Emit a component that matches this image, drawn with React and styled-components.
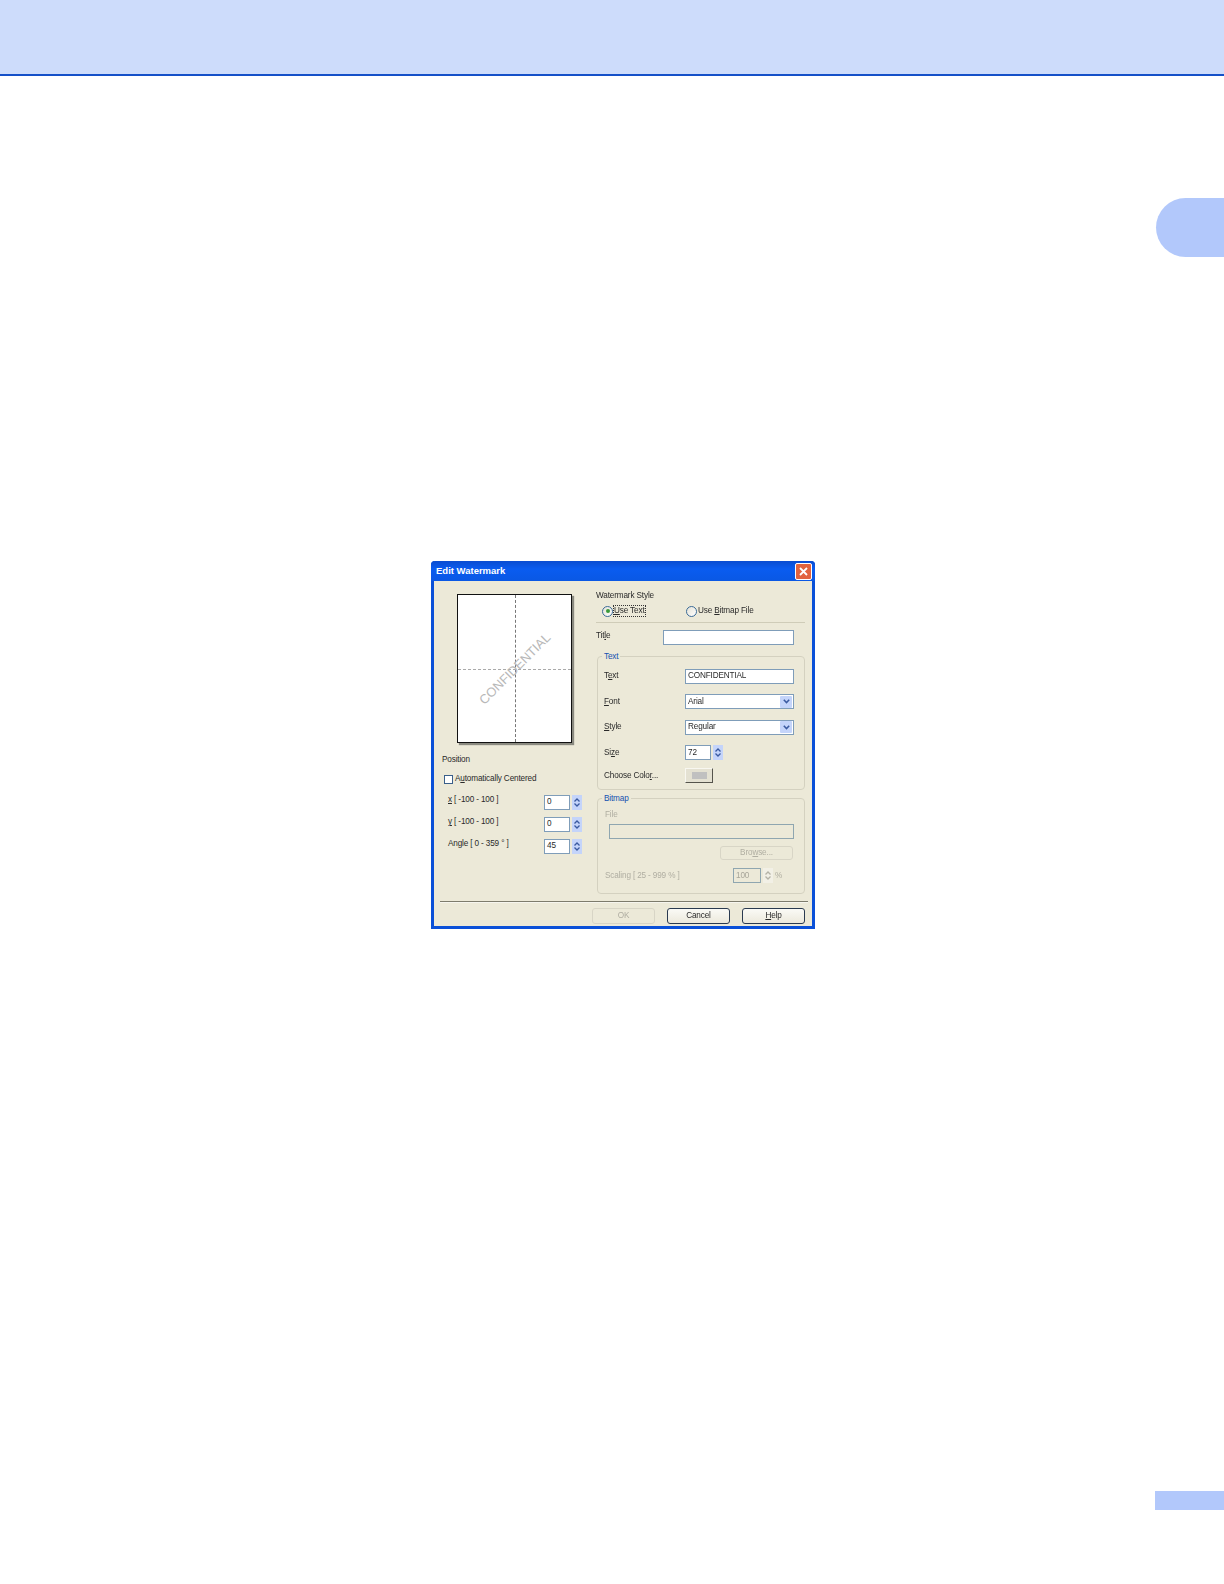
import styled, { createGlobalStyle } from "styled-components";

const Global = createGlobalStyle`
  html, body { margin: 0; padding: 0; background: #fff; }
  body { font-family: "Liberation Sans", Arial, sans-serif; }
`;

const Page = styled.div`
  position: relative;
  width: 1224px;
  height: 1584px;
  overflow: hidden;
`;

const Header = styled.div`
  height: 74px;
  background: #cddcfb;
  border-bottom: 2px solid #1450c8;
`;

const ChapterTab = styled.div`
  position: absolute;
  left: 1156px;
  top: 198px;
  width: 68px;
  height: 59px;
  background: #b2c8fb;
  border-radius: 30px 0 0 30px;
`;

const PageTab = styled.div`
  position: absolute;
  left: 1155px;
  top: 1491px;
  width: 69px;
  height: 19px;
  background: #b2c8fb;
`;

const Dialog = styled.div`
  box-sizing: border-box;
  width: 384px;
  height: 368px;
  margin: 485px 0 0 431px;
  border: 3px solid #0a50d8;
  border-top: 0;
  border-radius: 4px 4px 0 0;
  background: #ece9d8;
  color: #2a2a2a;
  font-size: 8.2px;
  line-height: 10px;
  letter-spacing: -0.15px;
  filter: blur(0.35px);
`;

const TitleBar = styled.div`
  display: flex;
  align-items: center;
  justify-content: space-between;
  height: 20px;
  margin: 0 -3px;
  padding: 0 3px 0 5px;
  border-radius: 4px 4px 0 0;
  background: linear-gradient(#0a4cd0, #0a5cf0 40%, #0a58e4);
  color: #fff;
  font-size: 9.5px;
  font-weight: 700;
  letter-spacing: 0;
`;

const CloseButton = styled.div`
  display: flex;
  align-items: center;
  justify-content: center;
  width: 15px;
  height: 15px;
  border: 1px solid #fff;
  border-radius: 2px;
  background: #e2633f;
`;

const Body = styled.div`
  display: grid;
  grid-template-columns: 159px 1fr;
  height: 320px;
`;

const LeftColumn = styled.div`
  padding: 13px 0 0 23px;
`;

const Preview = styled.div`
  position: relative;
  box-sizing: border-box;
  width: 115px;
  height: 149px;
  border: 1px solid #111;
  background: #fff;
  box-shadow: 2px 2px 1px #8a8a80;
  overflow: hidden;
`;

const GuideV = styled.div`
  position: absolute;
  left: 57px;
  top: 0;
  bottom: 0;
  border-left: 1px dashed #777;
`;

const GuideH = styled.div`
  position: absolute;
  left: 0;
  right: 0;
  top: 74px;
  border-top: 1px dashed #aaa;
`;

const Stamp = styled.div`
  position: absolute;
  left: 57px;
  top: 74px;
  transform: translate(-50%, -50%) rotate(-45deg);
  color: #b8b8b8;
  font-size: 12.9px;
  letter-spacing: 0;
  white-space: nowrap;
`;

const PositionBlock = styled.div`
  margin: 12px 0 0 -15px;
`;

const CheckRow = styled.div`
  display: flex;
  align-items: center;
  gap: 2px;
  margin: 9px 0 7px 2px;
`;

const Checkbox = styled.div`
  box-sizing: border-box;
  width: 9px;
  height: 9px;
  border: 1px solid #3a5f8a;
  background: #fff;
`;

const SpinRow = styled.div`
  display: grid;
  grid-template-columns: 96px auto;
  align-items: center;
  height: 22px;
  padding-left: 6px;
`;

const RaisedLabel = styled.span`
  padding-bottom: 4px;
`;

const Spin = styled.div`
  display: flex;
  align-items: center;
  gap: 2px;
`;

const Field = styled.div`
  box-sizing: border-box;
  display: flex;
  align-items: center;
  flex: none;
  width: ${(p) => p.$w || 109}px;
  height: ${(p) => p.$h || 15}px;
  padding-left: 2px;
  border: 1px solid ${(p) => (p.$off ? "#8fa6b0" : "#7f9db9")};
  background: ${(p) => (p.$off ? "#ece9d8" : "#fff")};
  color: ${(p) => (p.$off ? "#a8a69a" : "#2a2a2a")};
`;

const WideField = styled(Field)`
  margin: 4px 0 0 4px;
`;

const SpinArrows = styled.div`
  display: flex;
  flex-direction: column;
  justify-content: center;
  align-items: center;
  gap: 1px;
  width: 10px;
  height: 15px;
  background: ${(p) => (p.$off ? "#f2f0e6" : "#c4d4fa")};
  color: ${(p) => (p.$off ? "#b4b2a6" : "#3a5aa0")};
`;

const RightColumn = styled.div`
  padding: 10px 8px 0 3px;
`;

const StyleRadios = styled.div`
  display: flex;
  align-items: center;
  height: 16px;
  margin-top: 2px;
  padding: 0 0 0 6px;
`;

const RadioItem = styled.div`
  display: flex;
  align-items: center;
  gap: 1px;
  width: ${(p) => p.$w}px;
`;

const Radio = styled.div`
  display: flex;
  align-items: center;
  justify-content: center;
  box-sizing: border-box;
  width: 11px;
  height: 11px;
  border: 1px solid #3a6a96;
  border-radius: 50%;
  background: linear-gradient(135deg, #e4e2d6, #fff);
`;

const RadioDot = styled.div`
  width: 4px;
  height: 4px;
  border-radius: 50%;
  background: #3a9a3a;
`;

const FocusLabel = styled.span`
  outline: 1px dotted #333;
`;

const Underline = styled.span`
  text-decoration: underline;
`;

const Divider = styled.div`
  height: 0;
  border-top: 1px solid #cfccb8;
  margin-top: 3px;
`;

const TitleRow = styled.div`
  display: grid;
  grid-template-columns: 67px 131px;
  align-items: center;
  height: 15px;
  margin-top: 7px;
`;

const Group = styled.div`
  position: relative;
  box-sizing: border-box;
  width: 208px;
  height: ${(p) => p.$h}px;
  margin: ${(p) => p.$top}px 0 0 1px;
  padding: ${(p) => p.$pad};
  border: 1px solid #d4d1c0;
  border-radius: 4px;
`;

const Legend = styled.span`
  position: absolute;
  left: 4px;
  top: -5px;
  padding: 0 2px;
  background: #ece9d8;
  color: #1450b0;
`;

const FormRow = styled.div`
  display: grid;
  grid-template-columns: 81px auto;
  align-items: center;
  height: 15px;
  margin-bottom: 10.5px;

  &:last-child {
    margin-top: -2.5px;
    margin-bottom: 0;
  }
`;

const SelectBox = styled(Field)`
  justify-content: space-between;
  padding-right: 1px;
`;

const SelectArrow = styled.div`
  display: flex;
  align-items: center;
  justify-content: center;
  width: 12px;
  height: 12px;
  border-radius: 1px;
  background: #c4d4fa;
`;

const ColorButton = styled.div`
  display: flex;
  align-items: center;
  justify-content: center;
  box-sizing: border-box;
  width: 28px;
  height: 15px;
  border: 1px solid #f8f7f0;
  border-right-color: #55544c;
  border-bottom-color: #55544c;
  background: #e4e1d2;
`;

const Swatch = styled.div`
  width: 15px;
  height: 7px;
  background: #c0c0c0;
`;

const DisabledText = styled.div`
  color: #b0aea2;
`;

const BrowseRow = styled.div`
  display: flex;
  justify-content: flex-end;
  margin: 7px 11px 0 0;
`;

const ScaleRow = styled.div`
  display: flex;
  align-items: center;
  height: 15px;
  margin-top: 8px;
  color: #b0aea2;
`;

const ScaleLabel = styled.div`
  width: 128px;
`;

const PushButton = styled.div`
  box-sizing: border-box;
  display: flex;
  align-items: center;
  justify-content: center;
  width: ${(p) => p.$w}px;
  height: ${(p) => p.$h}px;
  border: 1px solid ${(p) => (p.$off ? "#d8d5c6" : "#2a3a50")};
  border-radius: 3px;
  background: ${(p) => (p.$off ? "#ece9d8" : "linear-gradient(#fafaf6, #ece9dc)")};
  color: ${(p) => (p.$off ? "#b0aea2" : "#2a2a2a")};
`;

const Footer = styled.div`
  height: 25px;
  margin: 0 4px 0 6px;
  border-top: 1px solid #7d7b6c;
  box-shadow: inset 0 1px 0 #f6f5ee;
`;

const FooterButtons = styled.div`
  display: flex;
  justify-content: flex-end;
  gap: 12px;
  padding: 6px 3px 0 0;
`;

const Arrow = ({ up }) => (
  <svg width="6" height="4" viewBox="0 0 6 4">
    <path
      d={up ? "M0.5 3.5 L3 1 L5.5 3.5" : "M0.5 0.5 L3 3 L5.5 0.5"}
      fill="none"
      stroke="currentColor"
      strokeWidth="1.3"
    />
  </svg>
);

const SpinControl = ({ value, off, w = 26 }) => (
  <Spin>
    <Field $w={w} $off={off}>{value}</Field>
    <SpinArrows $off={off}>
      <Arrow up />
      <Arrow />
    </SpinArrows>
  </Spin>
);

const Select = ({ value }) => (
  <SelectBox>
    {value}
    <SelectArrow>
      <svg width="7" height="5" viewBox="0 0 7 5">
        <path d="M0.8 0.8 L3.5 3.6 L6.2 0.8" fill="none" stroke="#3a5aa0" strokeWidth="1.5" />
      </svg>
    </SelectArrow>
  </SelectBox>
);

export default function App() {
  return (
    <Page>
      <Global />
      <Header />
      <ChapterTab />
      <Dialog>
        <TitleBar>
          Edit Watermark
          <CloseButton>
            <svg width="9" height="9" viewBox="0 0 9 9">
              <path d="M1 1 L8 8 M8 1 L1 8" stroke="#fff" strokeWidth="1.8" />
            </svg>
          </CloseButton>
        </TitleBar>
        <Body>
          <LeftColumn>
            <Preview>
              <GuideV />
              <GuideH />
              <Stamp>CONFIDENTIAL</Stamp>
            </Preview>
            <PositionBlock>
              <div>Position</div>
              <CheckRow>
                <Checkbox />
                <span>A<Underline>u</Underline>tomatically Centered</span>
              </CheckRow>
              <SpinRow>
                <RaisedLabel><Underline>x</Underline> [ -100 - 100 ]</RaisedLabel>
                <SpinControl value="0" />
              </SpinRow>
              <SpinRow>
                <RaisedLabel><Underline>y</Underline> [ -100 - 100 ]</RaisedLabel>
                <SpinControl value="0" />
              </SpinRow>
              <SpinRow>
                <RaisedLabel>Angle [ 0 - 359 ° ]</RaisedLabel>
                <SpinControl value="45" />
              </SpinRow>
            </PositionBlock>
          </LeftColumn>
          <RightColumn>
            <div>Watermark Style</div>
            <StyleRadios>
              <RadioItem $w={84}>
                <Radio><RadioDot /></Radio>
                <FocusLabel><Underline>U</Underline>se Text</FocusLabel>
              </RadioItem>
              <RadioItem $w={100}>
                <Radio />
                <span>Use <Underline>B</Underline>itmap File</span>
              </RadioItem>
            </StyleRadios>
            <Divider />
            <TitleRow>
              <RaisedLabel>Tit<Underline>l</Underline>e</RaisedLabel>
              <Field $w={131} />
            </TitleRow>
            <Group $h={134} $top={11} $pad="11.5px 0 0 6px">
              <Legend>Text</Legend>
              <FormRow>
                <span>T<Underline>e</Underline>xt</span>
                <Field>CONFIDENTIAL</Field>
              </FormRow>
              <FormRow>
                <span><Underline>F</Underline>ont</span>
                <Select value="Arial" />
              </FormRow>
              <FormRow>
                <span><Underline>S</Underline>tyle</span>
                <Select value="Regular" />
              </FormRow>
              <FormRow>
                <span>Si<Underline>z</Underline>e</span>
                <SpinControl value="72" />
              </FormRow>
              <FormRow>
                <span>Choose Colo<Underline>r</Underline>...</span>
                <ColorButton><Swatch /></ColorButton>
              </FormRow>
            </Group>
            <Group $h={96} $top={8} $pad="11px 0 0 7px">
              <Legend>Bitmap</Legend>
              <DisabledText>File</DisabledText>
              <WideField $w={185} $off />
              <BrowseRow>
                <PushButton $w={73} $h={14} $off>Bro<Underline>w</Underline>se...</PushButton>
              </BrowseRow>
              <ScaleRow>
                <ScaleLabel>Scaling [ 25 - 999 % ]</ScaleLabel>
                <SpinControl value="100" off w={28} />
                <span>&nbsp;%</span>
              </ScaleRow>
            </Group>
          </RightColumn>
        </Body>
        <Footer>
          <FooterButtons>
            <PushButton $w={63} $h={16} $off>OK</PushButton>
            <PushButton $w={63} $h={16}>Cancel</PushButton>
            <PushButton $w={63} $h={16}><Underline>H</Underline>elp</PushButton>
          </FooterButtons>
        </Footer>
      </Dialog>
      <PageTab />
    </Page>
  );
}
